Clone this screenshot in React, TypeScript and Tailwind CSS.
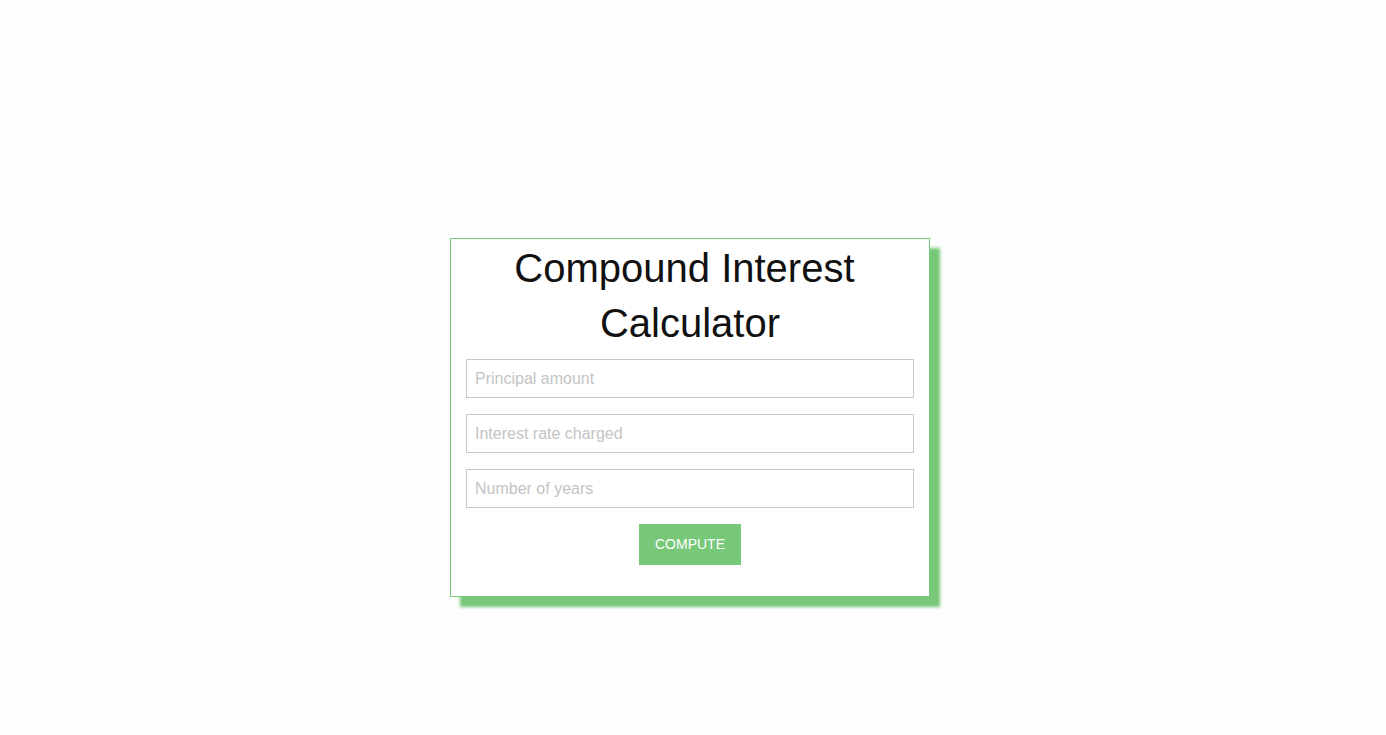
export default function App() {
  return (
    <div className="min-h-screen w-full bg-[#fdfdfd] font-['Liberation_Sans',Arial,sans-serif]">
      <div className="w-[1380px] pt-[238px] flex justify-center">
        <form
          className="w-[480px] border border-[#77c878] bg-white px-[15px] pb-[31px] shadow-[10px_10px_3px_#77c878]"
          onSubmit={(e) => e.preventDefault()}
        >
          <h1 className="text-[40px] leading-[55px] text-[#111] text-center pt-[2px] mb-[8px]">
            Compound Interest&nbsp;<wbr />Calculator
          </h1>
          <div className="flex flex-col gap-4">
            <input
              className="h-[39px] w-full border border-[#c8c8c8] px-2 pt-[1px] text-[16px] outline-none placeholder:text-[#c4c4c4]"
              placeholder="Principal amount"
            />
            <input
              className="h-[39px] w-full border border-[#c8c8c8] px-2 pt-[1px] text-[16px] outline-none placeholder:text-[#c4c4c4]"
              placeholder="Interest rate charged"
            />
            <input
              className="h-[39px] w-full border border-[#c8c8c8] px-2 pt-[1px] text-[16px] outline-none placeholder:text-[#c4c4c4]"
              placeholder="Number of years"
            />
            <div className="flex justify-center">
              <button className="h-[41px] w-[102px] bg-[#77c878] text-[14px] text-white">COMPUTE</button>
            </div>
          </div>
        </form>
      </div>
    </div>
  );
}
